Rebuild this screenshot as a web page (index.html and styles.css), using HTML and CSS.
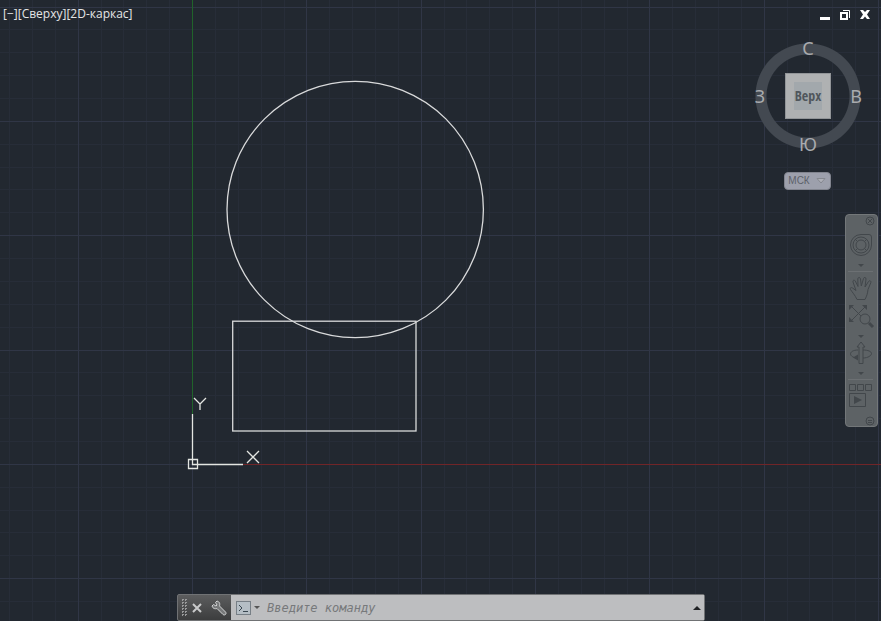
FILE: index.html
```html
<!DOCTYPE html>
<html lang="ru">
<head>
<meta charset="utf-8">
<title>2D-каркас</title>
<link rel="stylesheet" href="styles.css">
</head>
<body>
<main class="viewport">
  <svg class="drawing" aria-hidden="true">
    <defs>
      <pattern id="grid" x="192" y="7" width="343" height="343" patternUnits="userSpaceOnUse">
        <path class="minor" d="M23.500 0V343M46.500 0V343M69.500 0V343M92.500 0V343M137.500 0V343M160.500 0V343M183.500 0V343M206.500 0V343M252.500 0V343M274.500 0V343M297.500 0V343M320.500 0V343M0 22.500H343M0 45.500H343M0 68.500H343M0 91.500H343M0 137.500H343M0 160.500H343M0 182.500H343M0 205.500H343M0 251.500H343M0 274.500H343M0 297.500H343M0 320.500H343"/>
        <path class="major" d="M.5 0V343M114.500 0V343M229.500 0V343M0 .5H343M0 114.500H343M0 228.500H343"/>
      </pattern>
    </defs>
    <rect width="100%" height="100%" fill="url(#grid)"/>
    <rect class="axis-y" x="192" y="0" width="1" height="414"/>
    <rect class="axis-x" x="243" y="464" width="100%" height="1"/>
    <circle class="shape" cx="355.200" cy="209.500" r="128.200"/>
    <rect class="shape" x="232.700" y="321.200" width="183.300" height="109.800"/>
    <path class="ucs" d="M192.500 414V464.500H243M188.500 459.500h9v9h-9zM194 398l6 6v6M206 398l-6 6M247 451l12 12M259 451l-12 12"/>
  </svg>

  <header class="top">
    <nav class="labels">
      <button>[−]</button><button>[Сверху]</button><button>[2D-каркас]</button>
    </nav>
    <div class="window">
      <button aria-label="Свернуть"><svg width="12" height="12"><path fill="#fff" d="M1 8h10v3H1z"/></svg></button>
      <button aria-label="Восстановить"><svg width="12" height="12" fill="none" stroke="#fff"><path d="M4 1.500h6.500V9"/><path stroke-width="2" d="M2 4h6v6H2z"/></svg></button>
      <button aria-label="Закрыть"><svg width="12" height="12"><path fill="#fff" d="M1 1h3l2 2 2-2h3L8 5.500 11 10H8L6 7.500 4 10H1l3-4.500z"/></svg></button>
    </div>
  </header>

  <section class="compass">
    <div class="dial">
      <button class="north">С</button>
      <button class="west">З</button>
      <button class="cube"><span>Верх</span></button>
      <button class="east">В</button>
      <button class="south">Ю</button>
    </div>
    <button class="wcs">МСК <svg width="10" height="6"><path d="M1 .5h8L5 5z" fill="#aeb0b8" stroke="#85888f"/></svg></button>
  </section>

  <aside class="navbar">
    <button class="corner" aria-label="Закрыть панель"><svg width="10" height="10"><circle cx="5" cy="5" r="4"/><path d="M3 3l4 4M7 3L3 7"/></svg></button>
    <button class="tool wheel" aria-label="Штурвал"><svg width="24" height="24"><path d="M12 1.500h8q2.500 0 2.500 2.500V12A10.500 10.500 0 1 1 12 1.500z"/><circle cx="12" cy="12" r="8"/><circle cx="12" cy="12" r="5"/><path d="M6 6l2.500 2.500M18 6l-2.500 2.500M6 18l2.500-2.500M18 18l-2.500-2.500"/></svg></button>
    <button class="more" aria-label="Виды штурвала"><svg width="6" height="3"><path class="solid" d="M0 0h6L3 3z"/></svg></button>
    <hr>
    <button class="tool" aria-label="Панорамирование"><svg width="24" height="24"><path d="M8 23.500C6 19 3 16 1.500 13.500c-.8-1.500.5-2.500 2-1.500L7 14.500 4 6c-.5-2 1.500-2.500 2.300-1L9 10.500 8.800 3c0-2 2.500-2 2.700 0l.8 7L14.500 2.500c.5-1.800 2.700-1.200 2.500.5L16 11l3.500-5.500c1-1.500 3-.5 2.300 1.200L19 13.500c-.5 4-1 6-3 10z"/></svg></button>
    <button class="tool zoom" aria-label="Зумирование"><svg width="24" height="24"><path d="M3 3l13 13M16 3L3 16"/><path class="solid" d="M0 1h5L0 6zM13 1h5v5zM0 13v5h5z"/><circle class="lens" cx="16" cy="15" r="5"/><path stroke-width="3" d="M20 19l4 4"/></svg></button>
    <button class="more" aria-label="Виды зумирования"><svg width="6" height="3"><path class="solid" d="M0 0h6L3 3z"/></svg></button>
    <button class="tool" aria-label="Орбита"><svg width="24" height="24"><path d="M9 9C4 9 1.500 11 1.500 13S5 17 8 17M14 9c5 0 8.500 1.500 8.500 3.500S19 17 14 17"/><path class="solid" d="M4 16.500l5-3v6z"/><path class="arrow" d="M12 1l4 5h-2v16.500h-4V6H8z"/></svg></button>
    <button class="more" aria-label="Виды орбиты"><svg width="6" height="3"><path class="solid" d="M0 0h6L3 3z"/></svg></button>
    <hr>
    <button class="tool motion" aria-label="Аниматор движения"><svg width="24" height="24"><path d="M.5 .5h6v6h-6zM8.500 .5h6v6h-6zM16.500 .5h6v6h-6zM.5 9.500h16v13h-16z"/><path class="solid" d="M5 12l8 4-8 4z"/></svg></button>
    <button class="corner end" aria-label="Настройка панели"><svg width="10" height="10"><circle cx="5" cy="5" r="4"/><path d="M3 4.500h4M3 6.500h4"/></svg></button>
  </aside>

  <form class="command">
    <span class="grip"></span>
    <button class="dark" type="button" aria-label="Закрыть строку"><svg width="12" height="12"><path d="M2 2l8 8M10 2l-8 8" stroke="#c9cacb" stroke-width="2"/></svg></button>
    <button class="dark wrench" type="button" aria-label="Настройка"><svg width="16" height="16"><path d="M6 1L4.500 2.500 6 5 5 6 2.500 4.500 1 6c1 3 3.500 3 5 2.500L12 14.500c2 1.500 4-1 2.500-2.500L8.500 6C9 4 9 2 6 1z" fill="#77797a" stroke="#d3d4d5"/></svg></button>
    <div class="entry">
      <button class="recent" type="button" aria-label="Последние команды"><svg width="24" height="14"><rect x=".5" y=".5" width="14" height="13" fill="#b5bec5" stroke="#777f86"/><path d="M3 4l3 3-3 3M7 10.500h5" fill="none" stroke="#394650"/><path d="M18 5h6l-3 3z" fill="#555"/></svg></button>
      <input type="text" placeholder="Введите команду" aria-label="Команда">
      <button class="history" type="button" aria-label="Журнал команд"><svg width="8" height="4"><path d="M0 4l4-4 4 4z" fill="#202224"/></svg></button>
    </div>
  </form>
</main>
</body>
</html>
```
FILE: styles.css
```css
* { box-sizing: border-box; }

body {
  margin: 0;
  background: #222830;
  font-family: "Noto Sans", sans-serif;
}

button {
  display: flex;
  align-items: center;
  justify-content: center;
  padding: 0;
  border: 0;
  background: none;
  color: inherit;
  font: inherit;
}

svg { display: block; }

.viewport {
  position: relative;
  min-height: 100vh;
  overflow: hidden;
}

.drawing {
  position: absolute;
  inset: 0;
  width: 100%;
  height: 100%;
}

.minor { stroke: #272d38; }
.major { stroke: #303646; }
.axis-y { fill: #20632a; }
.axis-x { fill: #702528; }
.shape { fill: none; stroke: #d9dadb; stroke-width: 1.3; }
.ucs { fill: none; stroke: #e4e6e2; stroke-width: 1.3; }

.top {
  position: relative;
  display: flex;
  justify-content: space-between;
  padding: 5px 10px 0 3px;
}

.labels {
  display: flex;
  height: 18px;
  color: #e4e5e6;
  font: 500 12px/18px "Open Sans", sans-serif;
}

.window {
  display: flex;
  gap: 8px;
  height: 20px;
}

.compass {
  position: absolute;
  top: 38px;
  right: 18px;
  display: flex;
  flex-direction: column;
  align-items: center;
  gap: 18px;
}

.dial {
  display: grid;
  grid-template-columns: 14px 82px 14px;
  grid-template-rows: 20px 76px 20px;
  place-items: center;
  background: radial-gradient(circle, transparent 41px, #434951 42px, #434951 52px, transparent 53px);
  color: #a9abae;
  font-size: 18px;
  line-height: 20px;
}

.north, .south { grid-column: 2; }
.west { grid-column: 1; }

.cube {
  width: 46px;
  height: 46px;
  border: 1px solid #929598;
  background: #afb1b2;
  color: #50565c;
}

.cube span {
  display: flex;
  justify-content: center;
  width: 28px;
  height: 28px;
  background: #a2a8ac;
  font: 300 14px/28px "Open Sans Condensed", "Open Sans", sans-serif;
}

.wcs {
  gap: 6px;
  width: 47px;
  height: 18px;
  margin-right: 2px;
  border: 1px solid #82858f;
  border-radius: 4px;
  background: #9da0ac;
  color: #5c6069;
  font: 10px/16px "Liberation Sans", sans-serif;
}

.navbar {
  position: absolute;
  top: 214px;
  right: 3px;
  display: flex;
  flex-direction: column;
  align-items: center;
  width: 33px;
  padding: 1px 2px 0 0;
  border: 1px solid #737779;
  border-radius: 4px;
  background: #5d6265;
}

.navbar svg {
  fill: none;
  stroke: #42474b;
  overflow: visible;
}

.navbar .solid { fill: #42474b; stroke: none; }
.navbar .lens, .navbar .arrow { fill: #5d6265; }

.navbar hr {
  width: 25px;
  height: 1px;
  margin: 1px 0 4px;
  border: 0;
  background: #6c7073;
}

.corner { align-self: flex-end; height: 10px; }
.tool { height: 24px; }
.more { height: 10px; margin: 3px 0 0; }
.wheel { margin-top: 7px; }
.zoom { margin: 4px 0 0; }
.end { margin-top: 8px; }

.command {
  position: absolute;
  left: 177px;
  right: 176px;
  bottom: 0;
  display: flex;
  align-items: stretch;
  height: 27px;
  border: 1px solid #707274;
  border-radius: 2px;
  background: linear-gradient(#5c5d5e, #3c3d3e);
}

.grip {
  width: 6px;
  margin: 4px 4px 4px 3px;
  background: conic-gradient(#9a9b9c 25%, transparent 0) 0 0 / 3px 3px;
}

.dark { width: 12px; }
.wrench { width: 16px; margin: 0 4px 0 8px; }

.entry {
  display: flex;
  flex: 1;
  align-items: center;
  padding: 0 3px 0 5px;
  background: #bdbec0;
}

.entry input {
  flex: 1;
  min-width: 0;
  padding: 0 7px;
  border: 0;
  outline: 0;
  background: none;
  color: #444;
  font: italic 12px/20px "DejaVu Sans Mono", monospace;
}

.entry input::placeholder { color: #77797b; opacity: 1; }
```
